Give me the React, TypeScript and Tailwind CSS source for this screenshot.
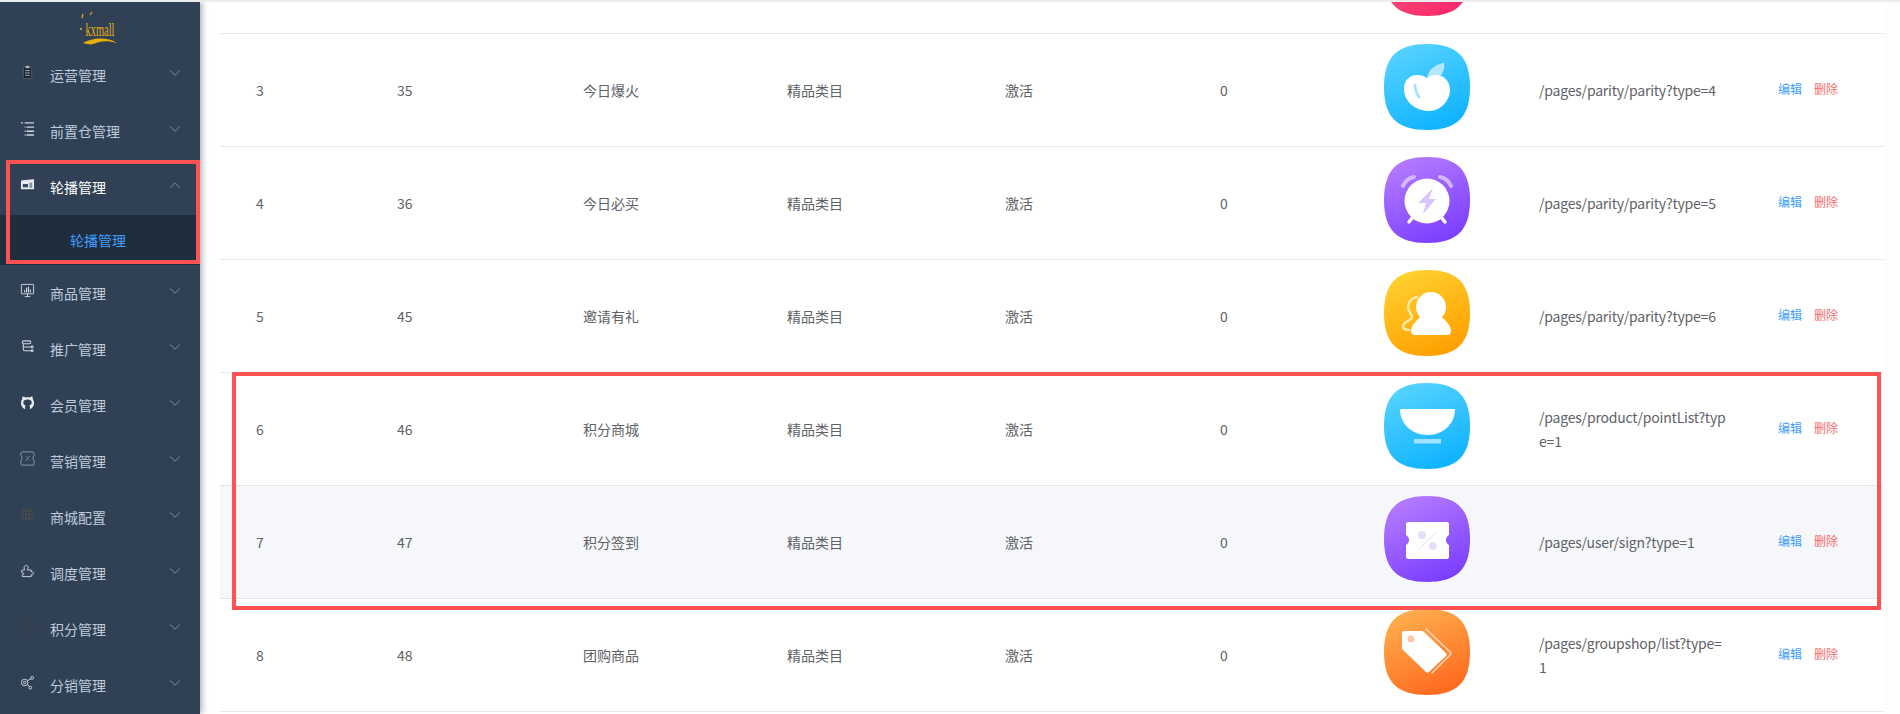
import React from "react";
import { ChevronDown, ChevronUp } from "lucide-react";

const squircle =
  "M43 0C73 0 86 13 86 43C86 73 73 86 43 86C13 86 0 73 0 43C0 13 13 0 43 0Z";

function AppIcon({
  id,
  from,
  to,
  children,
}: {
  id: string;
  from: string;
  to: string;
  children?: React.ReactNode;
}) {
  return (
    <svg width="86" height="86" viewBox="0 0 86 86" className="block shrink-0">
      <defs>
        <linearGradient id={id} x1="0.25" y1="0" x2="0.7" y2="1">
          <stop offset="0" stopColor={from} />
          <stop offset="1" stopColor={to} />
        </linearGradient>
      </defs>
      <path d={squircle} fill={`url(#${id})`} />
      {children}
    </svg>
  );
}

const AppleIcon = () => (
  <AppIcon id="apple" from="#56d3ff" to="#0db2ff">
    <path d="M43 33C45 25 52 20 60 19C61 26 58 33 50 35Z" fill="#b4e8ff" />
    <path d="M43 34C34 28 20 31 20 45C20 58 32 67 45 67C57 67 66 56 66 46C66 33 53 27 43 34Z" fill="#fff" />
    <path d="M31 41C31 46 33 50 35 53" stroke="#a9e4ff" strokeWidth="3" strokeLinecap="round" fill="none" />
  </AppIcon>
);

const ClockIcon = () => (
  <AppIcon id="clock" from="#b57cff" to="#7a3dff">
    <path d="M19 29C21 24 25 21 30 20" stroke="#d3b7ff" strokeWidth="4" strokeLinecap="round" fill="none" />
    <path d="M67 29C65 24 61 21 56 20" stroke="#d3b7ff" strokeWidth="4" strokeLinecap="round" fill="none" />
    <path d="M25 65L29 60M61 65L57 60" stroke="#fff" strokeWidth="3.5" strokeLinecap="round" />
    <circle cx="43" cy="44" r="22.5" fill="#fff" />
    <path d="M49 31L34 46H42L39 57L52 42H45Z" fill="#dac6ff" />
  </AppIcon>
);

const PersonIcon = () => (
  <AppIcon id="person" from="#ffd12f" to="#ff9e00">
    <path d="M33 27C27 28 24 33 24 37C24 42 28 44 28 47C28 50 19 52 19 56C19 59 22 60 25 60" stroke="#ffe7a6" strokeWidth="2.5" strokeLinecap="round" fill="none" />
    <circle cx="47" cy="37" r="15" fill="#fff" />
    <path d="M38 46H56C62 50 67 56 67 61C67 64 65 65 63 65H31C29 65 27 64 27 61C27 56 32 50 38 46Z" fill="#fff" />
  </AppIcon>
);

const BowlIcon = () => (
  <AppIcon id="bowl" from="#56d3ff" to="#0db2ff">
    <path d="M16 26H71C71 41 59 52 43.500 52C28 52 16 41 16 26Z" fill="#fff" />
    <rect x="30" y="56" width="27" height="4.500" fill="#a3e2ff" />
  </AppIcon>
);

const TicketIcon = () => (
  <AppIcon id="ticket" from="#b57cff" to="#7a3dff">
    <path d="M24 26H63C64 26 65 27 65 28V39C63 40 62 42 62 44C62 46 63 48 65 49V61C65 62 64 63 63 63H24C23 63 22 62 22 61V49C24 48 25 46 25 44C25 42 24 40 22 39V28C22 27 23 26 24 26Z" fill="#fff" />
    <circle cx="38" cy="39" r="4" fill="#e8dcf8" />
    <circle cx="49" cy="50" r="4" fill="#e8dcf8" />
    <path d="M53 36L35 53" stroke="#e8dcf8" strokeWidth="1" />
  </AppIcon>
);

const TagIcon = () => (
  <AppIcon id="tag" from="#ffb04e" to="#ff681e">
    <path d="M20 22H37C38 22 39 22 40 23L62 44C63 45 63 46 62 47L45 63C44 64 43 64 42 63L19 41C18 40 18 39 18 38V24C18 23 19 22 20 22Z" fill="#fff" />
    <circle cx="27" cy="30" r="3.500" fill="#fdc8a6" />
    <path d="M42 20L66 43C67 44 67 45 66 46L48 64" stroke="#ffd9bd" strokeWidth="1.500" strokeLinecap="round" fill="none" />
  </AppIcon>
);

type Row = {
  no: number;
  id: number;
  name: string;
  icon: React.ReactNode;
  path: string;
  active?: boolean;
};

const rows: Row[] = [
  { no: 3, id: 35, name: "今日爆火", icon: <AppleIcon />, path: "/pages/parity/parity?type=4" },
  { no: 4, id: 36, name: "今日必买", icon: <ClockIcon />, path: "/pages/parity/parity?type=5" },
  { no: 5, id: 45, name: "邀请有礼", icon: <PersonIcon />, path: "/pages/parity/parity?type=6" },
  { no: 6, id: 46, name: "积分商城", icon: <BowlIcon />, path: "/pages/product/pointList?type=1" },
  { no: 7, id: 47, name: "积分签到", icon: <TicketIcon />, path: "/pages/user/sign?type=1", active: true },
  { no: 8, id: 48, name: "团购商品", icon: <TagIcon />, path: "/pages/groupshop/list?type=1" },
];

const gridCols = "grid grid-cols-[141px_186px_204px_218px_215px_164px_155px_239px_1fr] pl-[36px]";

function TableRow({ row }: { row: Row }) {
  return (
    <div
      className={`${gridCols} h-[113px] items-center border-b border-[#e3e7ed] ${
        row.active ? "bg-[#f5f7fa]" : "bg-white"
      }`}
    >
      <div>{row.no}</div>
      <div>{row.id}</div>
      <div>{row.name}</div>
      <div>精品类目</div>
      <div>激活</div>
      <div>0</div>
      <div className="mb-[6px]">{row.icon}</div>
      <div className="w-[188px] break-all leading-[24px] tracking-[-0.2px]">{row.path}</div>
      <div className="flex gap-3 text-xs mb-[3px]">
        <span className="text-[#409eff]">编辑</span>
        <span className="text-[#f56c6c]">删除</span>
      </div>
    </div>
  );
}

const light = "#cfd6de";

const menuIcons: Record<string, React.ReactNode> = {
  clipboard: (
    <g>
      <rect x="3.500" y="2" width="9" height="12.500" rx="1" fill="#1b2430" stroke="#55606e" />
      <rect x="6" y="1" width="4" height="2.500" fill="#a9b2bd" />
      <path d="M5.500 6H10.500M5.500 8.500H10.500M5.500 11H10.500" stroke="#a9b2bd" />
    </g>
  ),
  list: (
    <g stroke={light} strokeWidth="1.500" fill="none">
      <path d="M1 2H3M5 2H15M7 6.500H15M5 6.500H6M7 11H15M5 11H6M7 15H15M5 15H6" />
    </g>
  ),
  banner: (
    <g>
      <path d="M3 3.500L14 2.500C15 2.500 15 3 15 4V13H1V5C1 4 2 3.500 3 3.500Z" fill="#e4e8ec" />
      <rect x="3" y="7.500" width="5.500" height="3.500" fill="#3a4a5e" />
      <rect x="10" y="6" width="3" height="5.500" fill="#8793a2" />
    </g>
  ),
  monitor: (
    <g fill="none" stroke={light}>
      <rect x="1.500" y="1.500" width="13" height="10" rx="0.500" />
      <path d="M5 14.500H11M8 11.500V14.500" />
      <path d="M5 10V7.500M7 10V5M9 10V4M11 10V7" strokeWidth="1.200" />
    </g>
  ),
  flow: (
    <g fill="none" stroke={light} strokeWidth="1.100">
      <rect x="2.500" y="2" width="9" height="3" rx="1.500" />
      <path d="M3.500 5V11C3.500 12 4 12.500 5 12.500H12M3.500 8.500H12" />
      <circle cx="13" cy="8.500" r="1" />
      <circle cx="13" cy="12.500" r="1" />
    </g>
  ),
  github: (
    <path
      d="M5.400 15.200C2.700 14.100 1 11.500 1 8.500C1 6.900 1.500 5.500 2.400 4.400C2.200 3.500 2.300 2.400 2.800 1.500C4 1.500 5 2 5.800 2.700C6.500 2.500 7.200 2.400 8 2.400C8.800 2.400 9.500 2.500 10.200 2.700C11 2 12 1.500 13.200 1.500C13.700 2.400 13.800 3.500 13.600 4.400C14.500 5.500 15 6.900 15 8.500C15 11.500 13.300 14.100 10.600 15.200V12.800C10.600 12 10.400 11.500 10 11.100C11.500 10.800 12.500 9.700 12.500 8C12.500 5.600 10.500 4.800 8 4.800C5.500 4.800 3.500 5.600 3.500 8C3.500 9.700 4.500 10.800 6 11.100C5.600 11.500 5.400 12 5.400 12.800Z"
      fill="#e6eaee"
    />
  ),
  percent: (
    <g fill="none" stroke="#9aa5b1" strokeWidth="0.900">
      <path d="M1 5V2C1 1.500 1.500 1 2 1H14C14.500 1 15 1.500 15 2V5C13.500 6 13.500 9 15 10.500V14C15 14.500 14.500 15 14 15H2C1.500 15 1 14.500 1 14V10.500C2.500 9 2.500 6 1 5Z" />
      <path d="M10 5.500L6 10.500M6 6H6.800M9.400 10H10.200" />
    </g>
  ),
  globe: (
    <g fill="#4a4d52">
      <circle cx="8" cy="8" r="6.500" />
      <path d="M1.500 6H14.500M1.500 10H14.500M8 1.500V14.500M5.500 2.500C4 6 4 10 5.500 13.500M10.500 2.500C12 6 12 10 10.500 13.500" stroke="#2d3a4a" strokeWidth="0.700" fill="none" />
    </g>
  ),
  puzzle: (
    <path
      d="M2 7.500H5C5 6.500 4 5.500 4.500 4C5 2.500 7 2 8 3C9 4 8.500 5.500 8 6.500L8 7.500H12V9.500C13.500 9 14.500 10 14.500 11C14.500 12 13.500 13 12 12.500V14.500H2.500V12.500C3.500 12.500 4 12 4 11.500C4 10.500 3 10 2 10.500Z"
      fill="none"
      stroke={light}
      strokeWidth="1"
    />
  ),
  layout: (
    <g fill="none" stroke="#3b4047" strokeWidth="1.200">
      <rect x="1.500" y="1.500" width="5" height="13" />
      <rect x="9" y="1.500" width="5.500" height="5" />
      <rect x="9" y="9" width="5.500" height="5.500" />
    </g>
  ),
  network: (
    <g fill="none" stroke={light} strokeWidth="1">
      <circle cx="5" cy="8" r="3.500" />
      <circle cx="5" cy="8" r="1.300" />
      <circle cx="13" cy="3" r="1.500" />
      <circle cx="11" cy="13.500" r="1.500" />
      <path d="M8 6L12 3.800M8 10L10 12.500" />
    </g>
  ),
};

const menu = [
  { label: "运营管理", icon: "clipboard" },
  { label: "前置仓管理", icon: "list" },
  { label: "轮播管理", icon: "banner", open: true },
  { label: "商品管理", icon: "monitor" },
  { label: "推广管理", icon: "flow" },
  { label: "会员管理", icon: "github" },
  { label: "营销管理", icon: "percent" },
  { label: "商城配置", icon: "globe" },
  { label: "调度管理", icon: "puzzle" },
  { label: "积分管理", icon: "layout" },
  { label: "分销管理", icon: "network" },
];

function Logo() {
  return (
    <div className="relative h-[45px] shrink-0 flex justify-center">
      <svg width="50" height="45" viewBox="0 0 50 45">
        <path d="M7 16L8 12M15 13L17 10" stroke="#e0a810" strokeWidth="1.300" fill="none" />
        <circle cx="6" cy="27" r="1.100" fill="#e0a810" />
        <path d="M8 41C16 36 32 34 42 41C32 38 26 39 18 42C15 43 12 42 8 41Z" fill="#e8ae08" />
      </svg>
      <span className="absolute left-0 right-0 top-[16px] text-center text-[19px] leading-[24px] scale-x-[0.55] text-[#e3ad12] font-['Liberation_Serif',serif]">
        kxmall
      </span>
    </div>
  );
}

function Sidebar() {
  return (
    <aside className="w-[200px] shrink-0 h-full bg-[#304156] shadow-[2px_0_6px_rgba(0,21,41,0.35)] z-10 flex flex-col overflow-hidden text-sm text-[#bfcbd9]">
      <Logo />
      {menu.map((item) => (
        <div key={item.label} className="shrink-0">
          <div className="h-[56px] flex items-center pl-5 pr-[20px]">
            <svg width="15" height="15" viewBox="0 0 16 16" className="shrink-0 mb-[5px]">
              {menuIcons[item.icon]}
            </svg>
            <span className={`ml-[15px] flex-1 ${item.open ? "text-white" : ""}`}>{item.label}</span>
            {item.open ? (
              <ChevronUp size={18} strokeWidth={1.2} className="text-[#8b95a2] mb-[5px] -mr-[4px]" />
            ) : (
              <ChevronDown size={18} strokeWidth={1.2} className="text-[#8b95a2] mb-[5px] -mr-[4px]" />
            )}
          </div>
          {item.open && (
            <div className="h-[50px] bg-[#1f2d3d] flex items-center pl-[70px] text-[#409eff]">轮播管理</div>
          )}
        </div>
      ))}
    </aside>
  );
}

export default function App() {
  return (
    <div className="relative h-[714px] w-full overflow-hidden flex border-t-2 border-[#ececec] bg-white font-['Noto_Sans_CJK_SC','Microsoft_YaHei',sans-serif]">
      <Sidebar />
      <main className="flex-1 flex min-w-0 pl-5 text-sm text-[#606266]">
        <div className="flex-1 min-w-0">
          <div className={`${gridCols} grid-rows-[31px] h-[32px] overflow-hidden border-b border-[#e3e7ed]`}>
            <div className="col-start-7 self-end mb-[17px]">
              <AppIcon id="pink" from="#ff6f8c" to="#f92a6a" />
            </div>
          </div>
          {rows.map((row) => (
            <TableRow key={row.no} row={row} />
          ))}
        </div>
        <div className="w-[17px] shrink-0 bg-[#fdfdfd]" />
      </main>
      {/* annotation boxes drawn over the screenshot */}
      <div className="absolute z-20 left-[6px] top-[158px] w-[194px] h-[104px] border-4 border-[#ff5252]" />
      <div className="absolute z-20 left-[232px] top-[370px] w-[1649px] h-[238px] border-4 border-[#ff5252]" />
    </div>
  );
}
